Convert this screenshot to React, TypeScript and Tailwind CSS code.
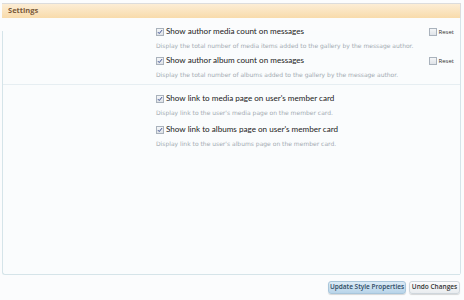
import React from "react";

const Check = ({ checked }: { checked?: boolean }) => (
  <span className="inline-flex h-[8px] w-[8px] shrink-0 items-center justify-center border border-[#a9b2bc] bg-gradient-to-b from-[#f4f6f8] to-[#dfe3e8]">
    {checked ? (
      <svg viewBox="0 0 8 8" className="h-[6px] w-[6px]">
        <path d="M1.2 4.2 L3 6 L6.8 1.4" fill="none" stroke="#3a4d8f" strokeWidth="1.3" />
      </svg>
    ) : null}
  </span>
);

const Option = ({
  label,
  desc,
  reset,
}: {
  label: string;
  desc: string;
  reset?: boolean;
}) => (
  <div className="flex">
    <div className="w-[153px] shrink-0" />
    <div className="flex-1">
      <div className="flex h-[11px] items-center gap-[2px]">
        <Check checked />
        <span className="text-[8.1px] leading-none text-[#222] font-['Lato',sans-serif]">{label}</span>
      </div>
      <div className="mt-[6px] text-[6px] leading-none text-[#a3abb2] font-['DejaVu_Sans',sans-serif]">
        {desc}
      </div>
    </div>
    {reset ? (
      <div className="mr-[6px] flex h-[11px] items-center gap-[2px]">
        <Check />
        <span className="text-[6px] leading-none text-[#333]">Reset</span>
      </div>
    ) : null}
  </div>
);

export default function App() {
  return (
    <div className="h-[300px] w-[464px] bg-[#fbfcfd] pt-[3px] font-['Open_Sans',sans-serif]">
      <div className="ml-[2px] mr-[3px] flex h-[15px] items-center border-t border-r border-[#dcdcdc] bg-gradient-to-b from-[#fcedd5] to-[#f8dbab] pl-[6px] text-[7.5px] font-bold text-[#7a5a3a]">
        Settings
      </div>
      <div className="ml-[2px] mr-[3px] flex h-[257px] flex-col rounded-br-[3px] border-r border-[#d5e4e9]">
        <div className="h-[13px] shrink-0" />
        <div className="flex flex-1 flex-col rounded-bl-[3px] border-b border-l border-[#d5e4e9] bg-[#fafcfd]">
          <div className="-mt-[5px] flex flex-col gap-[6px]">
            <Option
              label="Show author media count on messages"
              desc="Display the total number of media items added to the gallery by the message author."
              reset
            />
            <Option
              label="Show author album count on messages"
              desc="Display the total number of albums added to the gallery by the message author."
              reset
            />
          </div>
          <div className="mt-[6px] border-t border-[#e6eef2]" />
          <div className="mt-[8px] flex flex-col gap-[8px]">
            <Option
              label="Show link to media page on user's member card"
              desc="Display link to the user's media page on the member card."
            />
            <Option
              label="Show link to albums page on user's member card"
              desc="Display link to the user's albums page on the member card."
            />
          </div>
        </div>
      </div>
      <div className="mr-[4px] mt-[6px] flex justify-end gap-[3px]">
        <button className="h-[13px] w-[78px] rounded-[3px] border border-[#a9c6db] bg-gradient-to-b from-[#dcebf6] to-[#b8d4e9] text-[6.5px] font-semibold leading-none text-[#2e4a63] shadow-[0_1px_1px_rgba(0,0,0,0.15)]">
          Update Style Properties
        </button>
        <button className="h-[13px] w-[51px] rounded-[3px] border border-[#cfd6dc] bg-gradient-to-b from-[#fbfbfc] to-[#e9ecef] text-[6.5px] font-semibold leading-none text-[#333] shadow-[0_1px_1px_rgba(0,0,0,0.15)]">
          Undo Changes
        </button>
      </div>
    </div>
  );
}
